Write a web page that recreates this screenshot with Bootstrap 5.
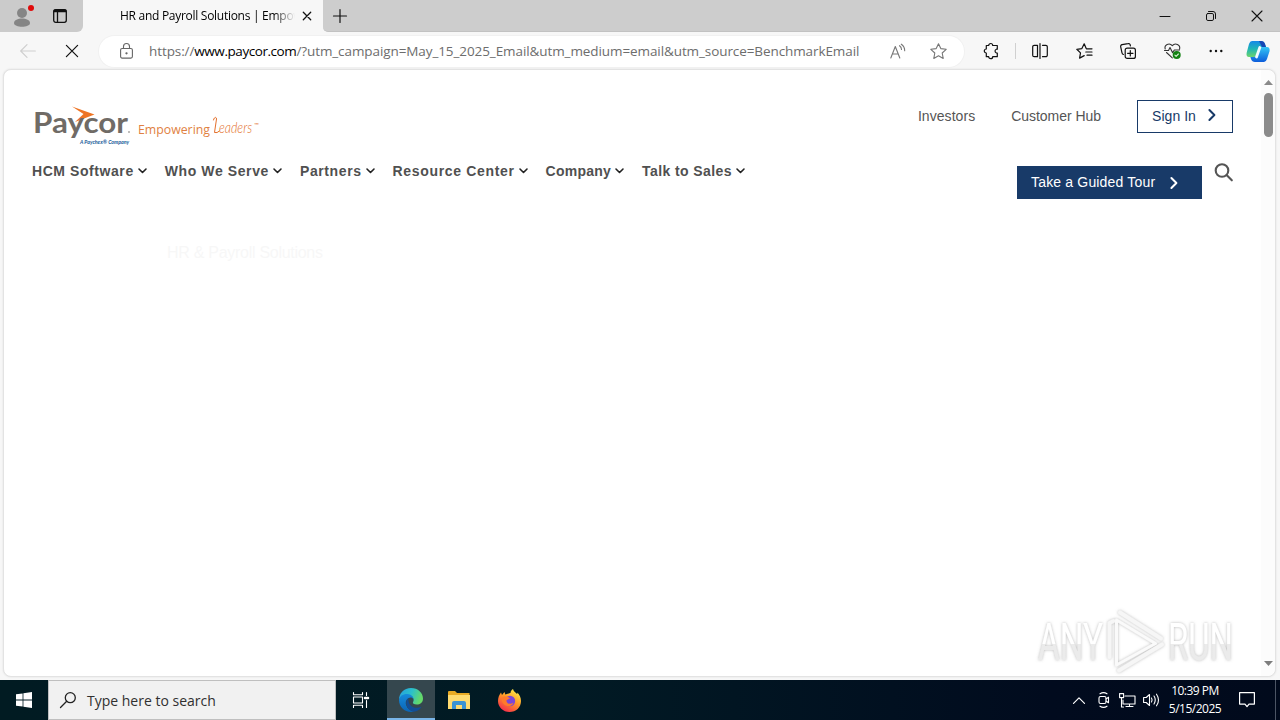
<!DOCTYPE html>
<html lang="en">

<head>
    <meta charset="UTF-8">
    <meta name="viewport" content="width=device-width, initial-scale=1.0">
    <title>HR and Payroll Solutions | Empowering Leaders</title>
    <link href="https://cdn.jsdelivr.net/npm/bootstrap@5.3.3/dist/css/bootstrap.min.css" rel="stylesheet" />
    <style>
        body { width: 1280px; height: 720px; overflow: hidden; background: #f7f7f7; font-family: "Open Sans", "Noto Sans", sans-serif; color: #000; }
        svg { display: block; flex: none; fill: none; stroke-linecap: round; stroke-linejoin: round; overflow: visible; }
        a { text-decoration: none; }

        /* browser window */
        .tabstrip { height: 32px; background: #f7f7f7; }
        .strip-left { width: 83px; background: #cbcbcb; border-radius: 0 0 6px 0; padding-left: 12px; gap: 15px; }
        .strip-right { background: #cdcdcd; border-radius: 0 0 0 5px; border-bottom: 1px solid #c2c2c2; padding-left: 10px; }
        .tab-box { width: 240px; background: #f7f7f7; border-radius: 7px 7px 0 0; padding-left: 37px; }
        .tab-title { width: 181px; font-size: 12px; letter-spacing: -.28px; white-space: nowrap; -webkit-mask-image: linear-gradient(90deg, #000 154px, transparent 175px); mask-image: linear-gradient(90deg, #000 154px, transparent 175px); }
        .tab-close { margin-left: 2px; }
        .win-btn { width: 46px; }
        .toolbar { height: 38px; }
        .tool-slot { width: 44px; }
        .stop-slot { margin-left: 2px; }
        .address { width: 865px; height: 31px; background: #fff; border-radius: 16px; margin: 0 5px; padding-left: 21px; box-shadow: 0 0 0 1px #f1f1f1; }
        .url-text { width: 757px; padding-left: 16px; font-size: 13.5px; letter-spacing: -.09px; color: #6d6d6d; white-space: nowrap; }
        .url-text b { font-weight: 400; letter-spacing: -.44px; color: #000; }
        .tool-sep { width: 1px; height: 16px; background: #d0d0d0; margin: 0 2px; }

        /* page */
        .viewport { height: 608px; margin: -1px 4px 0 3px; background: #fff; border: 1px solid #e3e3e3; border-radius: 8px; box-shadow: 0 0 2px #ddd; }
        .site { width: 1257px; font-family: "Liberation Sans", Arial, sans-serif; padding: 29px 28px 0 28px; }
        .brand-mark { margin-top: 5px; }
        .top-links { height: 34px; color: #555; font-size: 14px; letter-spacing: -.04px; gap: 36px; }
        .top-links span:first-child { letter-spacing: .06px; }
        .btn-site { --bs-btn-border-radius: 0; --bs-btn-padding-x: 14px; --bs-btn-padding-y: 0; --bs-btn-font-size: 14px; --bs-btn-color: #183a68; --bs-btn-border-color: #183a68; height: 33px; letter-spacing: .05px; }
        .btn-signin { width: 96px; }
        .btn-signin svg { margin-left: 12px; }
        .btn-tour { --bs-btn-bg: #183a68; --bs-btn-color: #fff; --bs-btn-padding-x: 13px; width: 185px; letter-spacing: .17px; }
        .btn-tour svg { margin-left: 15px; }
        .tour-row { margin-top: 33px; }
        .search-glass { margin: -3px 0 0 12px; }
        .main-links { gap: 18px; margin-top: 15px; font-size: 14px; font-weight: 700; letter-spacing: .5px; color: #505050; line-height: 20px; }
        .main-links a { color: inherit; display: flex; align-items: center; gap: 4px; white-space: nowrap; }
        .faint-title { margin: 43px 0 0 135px; font-size: 16px; line-height: 22px; letter-spacing: -.28px; color: #f7f7f7; }
        .scroller { width: 14px; background: #fcfcfc; padding: 10px 0 10px; border-radius: 0 8px 8px 0; }
        .scroll-thumb { width: 9px; height: 44px; border-radius: 5px; background: #8b8b8b; margin-top: 8px; }
        .anyrun { position: absolute; left: 1034px; top: 606px; }

        /* taskbar */
        .taskbar { height: 40px; margin-top: 3px; background: linear-gradient(90deg, #011b22 0, #011a24 45%, #010b1e 82%, #010a1c 100%); color: #fff; }
        .task-slot { width: 48px; }
        .task-search { width: 288px; background: #f1f1f1; border: 1px solid #bfbfbf; color: #303030; padding-left: 11px; gap: 11px; font-size: 14px; letter-spacing: 0; }
        .edge-slot { background: #35474e; border-bottom: 2px solid #79b5e8; padding-top: 2px; margin-left: 3px; }
        .clock { width: 62px; margin-left: 4px; font-size: 12px; line-height: 18px; letter-spacing: -.5px; text-align: center; white-space: nowrap; }
        .tray-cam { margin-left: 12px; }
        .tray-net { margin-left: 8px; }
        .tray-vol { margin-left: 7px; }
        .tray-note { margin-left: 13px; }
        .desk-edge { width: 1px; background: #4c5564; margin: 0 4px 0 20px; }
    </style>
</head>

<body>
    <div class="tabstrip d-flex">
        <div class="strip-left d-flex align-items-center">
            <svg width="22" height="24" viewBox="0 0 22 24">
                <circle cx="10" cy="9" r="5" fill="#858585" />
                <path d="M2 19c0-6 16-6 16 0 0 5-16 5-16 0z" fill="#858585" />
                <circle cx="19" cy="4" r="3" fill="#e00b0b" />
            </svg>
            <svg width="14" height="14" viewBox="0 0 14 14" stroke="#111" stroke-width="1.3" class="ms-1">
                <rect x=".7" y=".7" width="12.6" height="12.6" rx="2" />
                <path d="M1 2.7h12M4.5 3v10" /><path d="M1.5 1.6h11" stroke-width="2" />
            </svg>
        </div>
        <div class="tab-box d-flex align-items-center">
            <div class="tab-title">HR and Payroll Solutions | Empow</div>
            <svg width="8" height="8" viewBox="0 0 8 8" stroke="#111" stroke-width="1.3" class="tab-close"><path d="M.3.3l7.4 7.4M7.7.3L.3 7.7" /></svg>
        </div>
        <div class="strip-right d-flex align-items-center flex-grow-1">
            <svg width="14" height="14" viewBox="0 0 14 14" stroke="#111" stroke-width="1.2"><path d="M7 .5v13M.5 7h13" /></svg>
            <div class="d-flex ms-auto">
                <div class="win-btn d-flex justify-content-center align-items-center"><svg width="10" height="10" stroke="#111"><path d="M0 5.5h10" /></svg></div>
                <div class="win-btn d-flex justify-content-center align-items-center">
                    <svg width="10" height="10" viewBox="0 0 10 10" stroke="#111"><rect x=".5" y="2.5" width="7" height="7" rx="1.4" /><path d="M2.5.5H7a2.5 2.5 0 0 1 2.5 2.5v4.5" /></svg>
                </div>
                <div class="win-btn d-flex justify-content-center align-items-center"><svg width="10" height="10" stroke="#111" stroke-width="1.1"><path d="M0 0l10 10M10 0L0 10" /></svg></div>
            </div>
        </div>
    </div>

    <div class="toolbar d-flex align-items-center">
        <div class="tool-slot d-flex justify-content-center ms-1 ps-1"><svg width="16" height="14" viewBox="0 0 16 14" stroke="#cfcfcf" stroke-width="1.2"><path d="M15.3 7H.7M7 .7L.7 7 7 13.3" /></svg></div>
        <div class="tool-slot stop-slot d-flex justify-content-center"><svg width="12" height="12" stroke="#111" stroke-width="1.2"><path d="M.4.4l11.2 11.2M11.6.4L.4 11.6" /></svg></div>
        <div class="address d-flex align-items-center">
            <svg width="13" height="16" viewBox="0 0 13 16" stroke="#666" stroke-width="1.1"><rect x=".6" y="5.5" width="11.8" height="9.6" rx="1.5" /><path d="M3.5 5.3V3.5a3 3 0 0 1 6 0v1.8" /><circle cx="6.5" cy="10.3" r=".6" fill="#666" /></svg>
            <div class="url-text">https://<b>www.paycor.com</b>/?utm_campaign=May_15_2025_Email&amp;utm_medium=email&amp;utm_source=BenchmarkEmail</div>
            <svg width="16" height="15" viewBox="0 0 16 15" stroke="#777" stroke-width="1.1"><path d="M.8 14L5.3 2.5 9.8 14M2.4 10h5.8M9.5 1.7q2 1.3 2 3.8M11.3.2q3.4 2.2 3.4 6.500" /></svg>
            <svg width="17" height="16" viewBox="0 0 17 16" stroke="#777" stroke-width="1.1" class="ms-4"><path d="M8.5.7l2.3 4.900 5.400.7-4 3.700 1 5.400-4.700-2.600-4.700 2.600 1-5.400-4-3.700 5.400-.7z" /></svg>
        </div>
        <div class="tool-slot d-flex justify-content-center"><svg width="16" height="16" viewBox="0 0 16 16" stroke="#111" stroke-width="1.2"><path d="M3.3 2.500h2.400a2 2 0 0 1 4 0h4.600v3.700h-.9a2 2 0 0 0 0 3.800h.9v3.700H9.700a2 2 0 0 1-4 0H3.300V10a2 2 0 0 1 0-4z" /></svg></div>
        <div class="tool-sep"></div>
        <div class="tool-slot d-flex justify-content-center"><svg width="16" height="16" viewBox="0 0 16 16" stroke="#111" stroke-width="1.2"><path d="M5.5 2.3H2.2A1.5 1.5 0 0 0 .7 3.8v8.400a1.500 1.500 0 0 0 1.500 1.500h3.300zM10.500 2.300h3.300a1.500 1.500 0 0 1 1.500 1.500v8.400a1.500 1.500 0 0 1-1.500 1.500h-3.300M8 .5v15" /></svg></div>
        <div class="tool-slot d-flex justify-content-center"><svg width="17" height="16" viewBox="0 0 17 16" stroke="#111" stroke-width="1.2"><path d="M10.200 5.400L8.200.8 5.900 5.600.8 6.300l3.700 3.600-.9 5.200 4.600-2.500M10.500 5.800H16M9.800 9H16M11 12.200h5" /></svg></div>
        <div class="tool-slot d-flex justify-content-center"><svg width="16" height="16" viewBox="0 0 16 16" stroke="#111" stroke-width="1.2"><rect x="5.2" y="5.2" width="10.2" height="10.2" rx="2" /><path d="M10.300 7.600v5.400M7.600 10.300H13M3.400 11.500A2 2 0 0 1 2 9.800L.7 3.800a1.800 1.800 0 0 1 1.400-2.200L8 .6a1.800 1.800 0 0 1 2.200 1.400l.2.9" /></svg></div>
        <div class="tool-slot d-flex justify-content-center"><svg width="17" height="16" viewBox="0 0 17 16" stroke="#333" stroke-width="1.1"><path d="M1.200 6C0 2 5.200-.9 8.300 2.700c3-3.600 8.300-.7 7.300 3.300M.5 7.500h4l1.500-3 2.600 5.300 1.700-2.800h5.200M2.500 9.500l5.800 5.300" /><circle cx="12.7" cy="12.1" r="4" fill="#138113" stroke="none" /><path d="M10.900 12.200l1.200 1.100 2.300-2.300" stroke="#d7f1d3" /></svg></div>
        <div class="tool-slot d-flex justify-content-center"><svg width="14" height="4"><circle cx="1.7" cy="2" r="1.2" fill="#111" /><circle cx="7" cy="2" r="1.2" fill="#111" /><circle cx="12.3" cy="2" r="1.2" fill="#111" /></svg></div>
        <svg width="24" height="23" viewBox="0 0 24 23" class="ms-2">
            <defs>
                <linearGradient id="cpA" x1="0" y1="0" x2="0" y2="1"><stop offset="0" stop-color="#1689e8" /><stop offset=".5" stop-color="#20b6b5" /><stop offset="1" stop-color="#6cd46b" /></linearGradient>
                <linearGradient id="cpB" x1="0" y1="0" x2="0" y2="1"><stop offset="0" stop-color="#33c6f5" /><stop offset="1" stop-color="#0d5ddb" /></linearGradient>
            </defs>
            <path d="M6 1h9q3 0 4 3l1 3h-4q-2 0-3 3l-1.500 4q-1 3-4 3H3q-3 0-2.400-4L3 4q1-3 3-3z" fill="url(#cpA)" />
            <path d="M18 22H9q-3 0-4-3l-.6-2H8q2 0 3-3l1.500-4q1-3 4-3H21q3 0 2.600 4L21 19q-1 3-3 3z" fill="url(#cpB)" />
            <path d="M13 1h2q3 0 4 3l1 3h-4z" fill="#1746b5" />
            <path d="M13.800 7.500L10.500 17" stroke="#f2fbff" stroke-width="2.8" />
        </svg>
    </div>

    <main class="viewport d-flex">
        <div class="site">
            <header class="d-flex justify-content-between">
                <div>
                    <svg width="230" height="42" viewBox="0 0 230 42" class="brand-mark" font-family="Lato, sans-serif">
                        <path d="M40 2.500l22.500 8L43 18l8.500-8z" fill="#ee7424" />
                        <text x="1" y="29" font-size="28" font-weight="700" fill="#706b66" textLength="95" lengthAdjust="spacingAndGlyphs">Paycor</text>
                        <circle cx="97" cy="28" r=".8" fill="#706b66" />
                        <text x="48" y="40" font-size="5.8" font-weight="700" font-style="italic" fill="#155a98" textLength="49" lengthAdjust="spacingAndGlyphs">A Paychex® Company</text>
                        <text x="106" y="29.5" font-family="Open Sans" font-size="13.5" fill="#df8142" textLength="72" lengthAdjust="spacingAndGlyphs">Empowering</text>
                        <text x="187" y="29" font-size="16" font-style="italic" font-weight="300" fill="#e4702c" textLength="33" lengthAdjust="spacingAndGlyphs">eaders</text>
                        <path d="M181.500 16c.5-3 3-3.500 3-1l-2 13.500q2.500 1 5-1.500" stroke="#e4702c" stroke-width="1" />
                        <text x="222" y="23" font-size="6" fill="#e47b3b">™</text>
                    </svg>
                    <nav class="main-links d-flex" id="mainLinks"></nav>
                </div>
                <div class="d-flex flex-column align-items-end">
                    <div class="top-links d-flex align-items-center">
                        <span>Investors</span>
                        <span>Customer Hub</span>
                        <a class="btn btn-site btn-signin d-flex align-items-center text-nowrap" href="#">Sign In
                            <svg width="8" height="12" viewBox="0 0 8 12" stroke="#183a68" stroke-width="2"><path d="M1.400 0l5 5-5 5" /></svg></a>
                    </div>
                    <div class="tour-row d-flex">
                        <a class="btn btn-site btn-tour d-flex align-items-center text-nowrap" href="#">Take a Guided Tour
                            <svg width="8" height="12" viewBox="0 0 8 12" stroke="#fff" stroke-width="2"><path d="M1.400 1l5 5-5 5" /></svg></a>
                        <svg width="19" height="19" viewBox="0 0 19 19" stroke="#555" stroke-width="2.1" class="search-glass"><circle cx="8" cy="7.5" r="6.3" /><path d="M12.800 12.300l5 5" /></svg>
                    </div>
                </div>
            </header>
            <div class="faint-title">HR &amp; Payroll Solutions</div>
        </div>
        <div class="scroller d-flex flex-column align-items-center">
            <svg width="9" height="5"><path d="M4.500 0L9 5H0z" fill="#8a8a8a" /></svg>
            <div class="scroll-thumb"></div>
            <svg width="9" height="5" class="mt-auto"><path d="M0 0h9L4.500 5z" fill="#7d7d7d" /></svg>
        </div>
    </main>

    <!-- watermark lies over the page corner -->
    <svg class="anyrun" width="204" height="70" viewBox="0 0 204 70">
        <defs>
            <linearGradient id="wmFill" x1="0" y1="0" x2="0" y2="1"><stop offset=".52" stop-color="#fff" /><stop offset=".53" stop-color="#ebebeb" /></linearGradient>
            <filter id="wmShade" x="-20%" y="-20%" width="140%" height="140%"><feDropShadow dx="0" dy="0" stdDeviation="1.6" flood-color="#888" flood-opacity=".6" /></filter>
        </defs>
        <g filter="url(#wmShade)">
            <g font-family="Roboto, sans-serif" font-weight="400" font-size="52" fill="url(#wmFill)">
                <text x="4" y="54" textLength="65" lengthAdjust="spacingAndGlyphs">ANY</text>
                <text x="134" y="54" textLength="65" lengthAdjust="spacingAndGlyphs">RUN</text>
            </g>
            <path d="M82.500 59V14l39 23.500z" stroke="#fafafa" stroke-width="3" />
            <path d="M75.500 51V17l4-2M86 6.500l41 26M85 64.500l43-26" stroke="#f6f6f6" stroke-width="4" />
        </g>
    </svg>

    <footer class="taskbar d-flex">
        <div class="task-slot d-flex justify-content-center align-items-center">
            <svg width="16" height="16" viewBox="0 0 16 16"><path fill="#fff" d="M0 2.300L6.600 1.400v6.200H0zM7.400 1.300L16 0v7.600H7.400zM0 8.400h6.600v6.200L0 13.700zM7.400 8.400H16V16l-8.600-1.200z" /></svg>
        </div>
        <div class="task-search d-flex align-items-center">
            <svg width="16" height="16" viewBox="0 0 16 16" stroke="#222" stroke-width="1.3"><circle cx="10.3" cy="5.7" r="5" /><path d="M6.700 9.300L.5 15.500" /></svg>
            <span>Type here to search</span>
        </div>
        <div class="task-slot d-flex justify-content-center align-items-center">
            <svg width="17" height="16" viewBox="0 0 17 16" stroke="#fff" stroke-width="1.1" stroke-linecap="butt"><path d="M1.500.5v2.300h9V.5M1.500 15.500v-2.300h9v2.300M1.500 5h9v6h-9zM14.500.5v3M14.500 8.500v7" /><path d="M13 6h3" stroke-width="2.5" /></svg>
        </div>
        <div class="task-slot edge-slot d-flex justify-content-center align-items-center">
            <svg width="24" height="24" viewBox="0 0 24 24">
                <defs>
                    <linearGradient id="egA" x1="0" y1="0" x2="1" y2=".3"><stop offset="0" stop-color="#259ee0" /><stop offset=".55" stop-color="#2bc0cb" /><stop offset="1" stop-color="#64d96a" /></linearGradient>
                    <linearGradient id="egB" x1="0" y1="0" x2="0" y2="1"><stop offset="0" stop-color="#168bdb" /><stop offset="1" stop-color="#0b64b5" /></linearGradient>
                </defs>
                <path d="M0 12C0 5 5 0 12 0s12 5 12 10.500c0 4-3 6-6.200 6-3 0-4.400-1.200-3.800-2.200 2-3-.5-7-5-7S.8 9 0 12z" fill="url(#egA)" />
                <path d="M0 12c.5-4 4-6.200 8.500-6 3.500.2 6 2.500 6 5-1-1.500-3-2-5-1C4 13 7 22 15 23.600 7 25.500 0 19.500 0 12z" fill="url(#egB)" />
                <path d="M9.500 10C5 13 7.500 22 14.500 23.700c3.500-.2 6.500-2.200 8-5-6 3-14 0-13-8.700z" fill="#124d96" />
            </svg>
        </div>
        <div class="task-slot d-flex justify-content-center align-items-center pe-0">
            <svg width="22" height="18" viewBox="0 0 22 18"><path d="M0 1q0-1 1-1h6l2 2h12.500v16H0z" fill="#e9ab25" /><path d="M0 4h22v14H0z" fill="#ffdb70" /><path d="M4 18v-6q0-2 2-2h10q2 0 2 2v6h-4v-4H8v4z" fill="#3b93d3" /></svg>
        </div>
        <div class="task-slot d-flex justify-content-center align-items-center ps-1">
            <svg width="23" height="23" viewBox="0 0 23 23">
                <defs><linearGradient id="ffA" x1=".8" y1="0" x2=".2" y2="1"><stop offset="0" stop-color="#fff14b" /><stop offset=".45" stop-color="#ff9a26" /><stop offset="1" stop-color="#f4234f" /></linearGradient></defs>
                <path d="M12.500 4C12.500 2 13.500 1 15 0c.5 2.500 3 3.500 4 5 .5-.5.5-1 .3-1.500C21.500 5.500 23 8.500 23 12c0 6.500-5 11-11.500 11S0 18 0 12c0-3 1-6 3-8.500L4 6l2.500-3 .8 2.500c1.700-.7 3.500-1 5.200-1.500z" fill="url(#ffA)" />
                <circle cx="12" cy="12" r="5.2" fill="#7b46d8" /><path d="M3.500 9c3-2.500 6.500-1.500 9 .5-2 0-2.500 1.500-4 1.700-.5 4 4.500 4.500 7 2.500-2 5.500-12 4.500-12-4.700z" fill="#ff7a2b" />
            </svg>
        </div>
        <div class="d-flex align-items-center ms-auto">
            <svg width="12" height="7" viewBox="0 0 12 7" stroke="#fff" stroke-width="1.2"><path d="M.5 6.300L6 .8l5.500 5.500" /></svg>
            <svg width="14" height="16" viewBox="0 0 14 16" stroke="#fff" stroke-width="1.1" class="tray-cam"><rect x="2" y="4.5" width="7" height="7" rx="1.5" /><path d="M9 7l2.500-1.800v5.600L9 9M3 1.800Q6.500-.6 10 1.800M3 14.200q3.500 2.400 7 0" /></svg>
            <svg width="17" height="15" viewBox="0 0 17 15" stroke="#fff" stroke-width="1.1" class="tray-net"><path d="M6 3h10v8H4V7M10.500 11v2.500M7 13.500h7M.6.6h4v4H.6zM2.500 5v9h2" /></svg>
            <svg width="17" height="14" viewBox="0 0 17 14" stroke="#fff" stroke-width="1.1" class="tray-vol"><path d="M.6 4.500h2.600L6.500 1.500v11L3.200 9.500H.6zM8.500 5q1.200 2 0 4M11 3q2.500 4 0 8M13.500 1.200q4 5.800 0 11.600" /></svg>
            <div class="clock">10:39 PM<br>5/15/2025</div>
            <svg width="16" height="16" viewBox="0 0 16 16" stroke="#fff" stroke-width="1.2" class="tray-note"><path d="M.6.6h14.800v11.500H10L8 14.600l-2-2.500H.6z" /></svg>
            <div class="desk-edge align-self-stretch"></div>
        </div>
    </footer>

    <script>
    const links = [
        { name: "HCM Software", space: 0.57 },
        { name: "Who We Serve", space: 0.6 },
        { name: "Partners", space: 0.6 },
        { name: "Resource Center", space: 0.66 },
        { name: "Company", space: 0.25 },
        { name: "Talk to Sales", space: 0.4 },
    ];
    let items = "";
    links.forEach(val => {
        items += `<a href="#"><span style="letter-spacing: ${val.space}px">${val.name}</span><svg width="9" height="6" viewBox="0 0 9 6" stroke="#222" stroke-width="1.6"><path d="M1 1l3.500 3.500L8 1"/></svg></a>`;
    });
    document.getElementById('mainLinks').innerHTML = items;
    </script>
    <script src="https://cdn.jsdelivr.net/npm/bootstrap@5.3.3/dist/js/bootstrap.bundle.min.js"></script>
</body>

</html>
